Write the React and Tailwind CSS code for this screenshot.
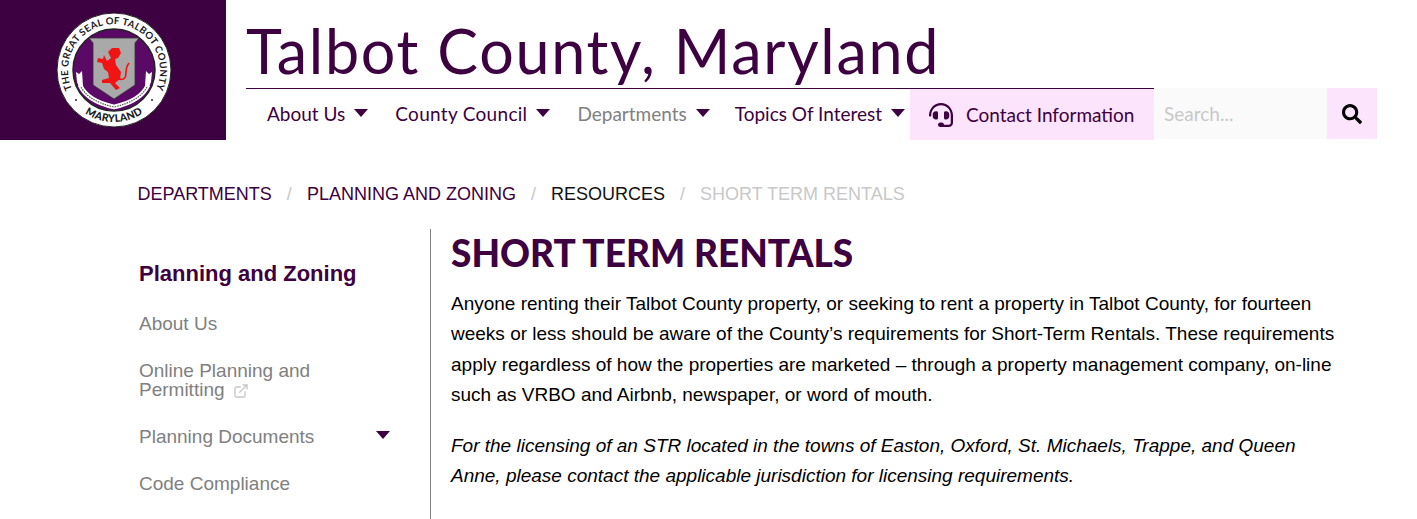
import { FaHeadset, FaSearch } from "react-icons/fa";
import { FiExternalLink } from "react-icons/fi";

// county seal, drawn small like the header logo
function Seal() {
  return (
    <svg width="116" height="116" viewBox="0 0 116 116" className="block">
      <defs>
        <path id="sealTop" d="M 17 79 A 46 46 0 1 1 99 79" />
        <path id="sealBottom" d="M 23 96.5 A 52 52 0 0 0 93 96.5" />
      </defs>
      <circle cx="58" cy="58" r="57" fill="#fff" stroke="#222" strokeWidth="1" />
      <circle cx="58" cy="58" r="41" fill="#5a0a66" stroke="#222" strokeWidth="1.5" />
      <text fontFamily="Lato, sans-serif" fontWeight="700" fontSize="9.7" fill="#1a1a1a" letterSpacing="0.3" textAnchor="middle">
        <textPath href="#sealTop" startOffset="50%">THE GREAT SEAL OF TALBOT COUNTY</textPath>
      </text>
      <text fontFamily="Lato, sans-serif" fontWeight="900" fontSize="10.5" fill="#1a1a1a" letterSpacing="0.2" textAnchor="middle">
        <textPath href="#sealBottom" startOffset="50%">MARYLAND</textPath>
      </text>
      <circle cx="20" cy="88" r="1" fill="#222" />
      <circle cx="96" cy="88" r="1" fill="#222" />
      {/* motto ribbon */}
      <path d="M24 73 Q31 89 58 95 Q85 89 92 73" fill="none" stroke="#fff" strokeWidth="4.5" />
      <path d="M24 73 Q31 89 58 95 Q85 89 92 73" fill="none" stroke="#555" strokeWidth="1.2" strokeDasharray="1.5 1" />
      <path d="M20 60 L23 62 L26 59 L27 74 L23 75 L21 70 Z" fill="#fff" />
      <path d="M96 60 L93 62 L90 59 L89 74 L93 75 L95 70 Z" fill="#fff" />
      {/* shield and lion */}
      <path d="M33 26 H83 L79 31 V73 L58 87 L37 73 V31 Z" fill="#a9a9a9" stroke="#333" strokeWidth="0.8" />
      <path d="M63 67 Q70 69 70 61 Q70 55 73 51" fill="none" stroke="#f01414" strokeWidth="1.6" />
      <path
        d="M52 40 L56 36 L63 36 L65 41 L62 46 L59 47 L60 53 L65 60 L64 67 L59 71 L64 76 L60 78 L54 71 L46 71 L46 68 L53 66 L52 60 L48 57 L46 51 L41 50 L42 46 L47 47 L48 43 L51 49 L55 46 Z"
        fill="#f01414"
      />
    </svg>
  );
}

function Caret({ className }) {
  return (
    <svg width="14" height="8" viewBox="0 0 14 8" className={className}>
      <path d="M0 0 H14 L7 8 Z" fill="#3d0040" />
    </svg>
  );
}

function NavItem({ label, muted, className }) {
  return (
    <a className={`flex items-center gap-[9px] whitespace-nowrap text-[19px] ${muted ? "text-[#808080]" : "text-[#3d0040]"} ${className || ""}`}>
      {label}
      <Caret className="mt-[-3px]" />
    </a>
  );
}

function Header() {
  return (
    <header className="flex h-[140px]">
      <div className="w-[226px] h-[140px] bg-[#3d0040] flex items-center justify-center pl-[1px] shrink-0">
        <Seal />
      </div>
      <div className="ml-[20px] flex-1 flex flex-col">
        <h1 className="h-[89px] w-[908px] border-b border-[#3d0040] text-[61px] leading-[102px] tracking-[1.7px] whitespace-nowrap text-[#3d0040] font-[Lato,sans-serif]">
          Talbot County, Maryland
        </h1>
        <div className="flex items-start font-[Lato,sans-serif] mt-[-1px]">
          <nav className="flex w-[664px] items-center pl-[21px] gap-[27px] h-[52px]">
            <NavItem label="About Us" />
            <NavItem label="County Council" className="tracking-[0.3px]" />
            <NavItem label="Departments" muted />
            <NavItem label="Topics Of Interest" className="ml-[-2px]" />
          </nav>
          <a className="w-[244px] h-[51px] mt-[1px] bg-[#fce4fc] flex items-center pl-[19px] gap-[13px] text-[19px] whitespace-nowrap text-[#3d0040]">
            <FaHeadset className="w-[24px] h-[24px]" />
            <span className="mt-[2px]">Contact Information</span>
          </a>
          <div className="w-[173px] h-[51px] bg-[#fafafa] flex items-center pl-[10px] pt-[1px] text-[19px] text-[#c8c8c8]">
            Search...
          </div>
          <button className="w-[50px] h-[51px] bg-[#fce4fc] flex items-center justify-center text-black">
            <FaSearch className="w-[20px] h-[20px]" />
          </button>
        </div>
      </div>
    </header>
  );
}

function Breadcrumbs() {
  return (
    <div className="flex items-center h-[24px] mt-[42px] ml-[137.5px] text-[18px] font-['Liberation_Sans',sans-serif]">
      <span className="text-[#3d0040]">DEPARTMENTS</span>
      <span className="text-[#c8c8c8] mx-[15px]">/</span>
      <span className="text-[#3d0040]">PLANNING AND ZONING</span>
      <span className="text-[#c8c8c8] mx-[15px]">/</span>
      <span className="text-[#111]">RESOURCES</span>
      <span className="text-[#c8c8c8] mx-[15px]">/</span>
      <span className="text-[#c8c8c8]">SHORT TERM RENTALS</span>
    </div>
  );
}

function Sidebar() {
  return (
    <aside className="w-[292px] ml-[139px] h-[290px] border-r border-[#808080] text-[19px] leading-[19px] text-[#808080] font-['Liberation_Sans',sans-serif] pt-[33px] shrink-0">
      <h2 className="text-[22px] leading-[24px] font-bold text-[#3d0040]">Planning and Zoning</h2>
      <div className="mt-[28px]">About Us</div>
      <div className="mt-[28px]">
        Online Planning and
        <br />
        Permitting
        <FiExternalLink className="inline-block w-[16px] h-[16px] ml-[8px] text-[#c8c8c8]" />
      </div>
      <div className="mt-[28px] flex items-center justify-between pr-[40px]">
        Planning Documents
        <Caret className="mt-[-3px]" />
      </div>
      <div className="mt-[28px]">Code Compliance</div>
    </aside>
  );
}

function Main() {
  return (
    <main className="ml-[20px] w-[920px] font-['Liberation_Sans',sans-serif] text-black text-[19px] leading-[30.5px]">
      <h1 className="text-[37px] leading-[48px] font-black text-[#3d0040] font-[Lato,sans-serif]">
        SHORT TERM RENTALS
      </h1>
      <p className="mt-[11.5px] whitespace-nowrap">
        Anyone renting their Talbot County property, or seeking to rent a property in Talbot County, for fourteen
        <br />
        weeks or less should be aware of the County’s requirements for Short-Term Rentals. These requirements
        <br />
        apply regardless of how the properties are marketed – through a property management company, on-line
        <br />
        such as VRBO and Airbnb, newspaper, or word of mouth.
      </p>
      <p className="mt-[20px] italic whitespace-nowrap">
        For the licensing of an STR located in the towns of Easton, Oxford, St. Michaels, Trappe, and Queen
        <br />
        Anne, please contact the applicable jurisdiction for licensing requirements.
      </p>
    </main>
  );
}

export default function App() {
  return (
    <div className="w-[1417px] h-[519px] overflow-hidden bg-white">
      <Header />
      <Breadcrumbs />
      <div className="flex mt-[23px]">
        <Sidebar />
        <Main />
      </div>
    </div>
  );
}
